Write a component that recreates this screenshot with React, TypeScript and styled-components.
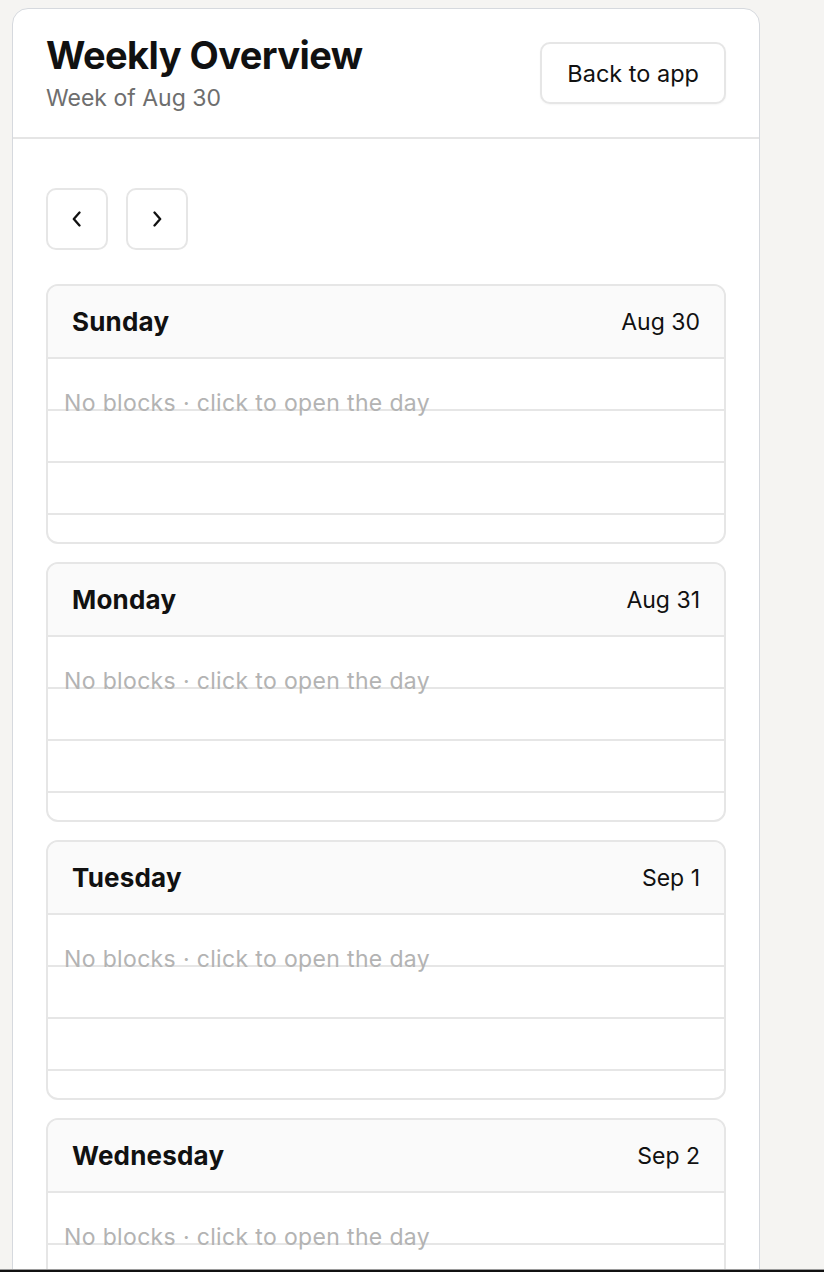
import React from 'react';
import styled, { createGlobalStyle } from 'styled-components';

const GlobalStyle = createGlobalStyle`
  html, body {
    margin: 0;
    padding: 0;
    background: #f5f4f2;
    font-family: Inter, "Noto Sans", "Liberation Sans", sans-serif;
    color: #111111;
  }
  * {
    box-sizing: border-box;
  }
`;

interface Day {
  name: string;
  date: string;
}

const days: Day[] = [
  { name: 'Sunday', date: 'Aug 30' },
  { name: 'Monday', date: 'Aug 31' },
  { name: 'Tuesday', date: 'Sep 1' },
  { name: 'Wednesday', date: 'Sep 2' },
  { name: 'Thursday', date: 'Sep 3' },
  { name: 'Friday', date: 'Sep 4' },
  { name: 'Saturday', date: 'Sep 5' },
];

const HOUR_ROWS = 4;

const Chevron = ({ dir }: { dir: 'left' | 'right' }) => (
  <svg width="12" height="16" viewBox="0 0 12 16" fill="none">
    <path
      d={dir === 'left' ? 'M8.5 1.5 L2.8 8 L8.5 14.5' : 'M3.5 1.5 L9.2 8 L3.5 14.5'}
      stroke="#111"
      strokeWidth="2.3"
      strokeLinecap="round"
      strokeLinejoin="round"
    />
  </svg>
);

const DayCard = ({ day }: { day: Day }) => (
  <Styled.DayCard>
    <Styled.DayHeader>
      <Styled.DayName>{day.name}</Styled.DayName>
      <Styled.DayDate>{day.date}</Styled.DayDate>
    </Styled.DayHeader>
    <Styled.DayBody>
      {Array.from({ length: HOUR_ROWS }).map((_, i) => (
        <Styled.HourRow key={i} />
      ))}
      <Styled.Empty>No blocks · click to open the day</Styled.Empty>
    </Styled.DayBody>
  </Styled.DayCard>
);

const App = () => {
  return (
    <>
      <GlobalStyle />
      <Styled.Page>
        <Styled.Panel>
          <Styled.Header>
            <Styled.TitleBlock>
              <Styled.Title>Weekly Overview</Styled.Title>
              <Styled.Subtitle>Week of Aug 30</Styled.Subtitle>
            </Styled.TitleBlock>
            <Styled.Button>Back to app</Styled.Button>
          </Styled.Header>
          <Styled.Content>
            <Styled.Nav>
              <Styled.IconButton aria-label="Previous week">
                <Chevron dir="left" />
              </Styled.IconButton>
              <Styled.IconButton aria-label="Next week">
                <Chevron dir="right" />
              </Styled.IconButton>
            </Styled.Nav>
            <Styled.DayList>
              {days.map((d) => (
                <DayCard key={d.name} day={d} />
              ))}
            </Styled.DayList>
          </Styled.Content>
        </Styled.Panel>
      </Styled.Page>
      <Styled.WindowEdge />
    </>
  );
};

const Styled = {
  Page: styled.div`
    padding: 8px 0 0 12px;
  `,
  Panel: styled.div`
    width: 748px;
    background: #ffffff;
    border: 1.5px solid #d6d9de;
    border-radius: 16px;
  `,
  Header: styled.header`
    height: 130px;
    display: flex;
    align-items: center;
    justify-content: space-between;
    padding: 0 33px;
    border-bottom: 2px solid #e5e5e5;
  `,
  TitleBlock: styled.div`
    display: flex;
    flex-direction: column;
    gap: 6px;
    margin-top: -1px;
  `,
  Title: styled.h1`
    margin: 0;
    font-size: 38px;
    line-height: 44px;
    font-weight: 700;
    letter-spacing: -0.015em;
  `,
  Subtitle: styled.div`
    font-size: 23px;
    line-height: 30px;
    color: #6e6e6e;
  `,
  Button: styled.button`
    height: 62px;
    padding: 0 25px;
    background: #ffffff;
    border: 2px solid #e6e6e6;
    border-radius: 10px;
    font-family: inherit;
    font-size: 23.5px;
    color: #111111;
    box-shadow: 0 1px 2px rgba(0, 0, 0, 0.04);
  `,
  Content: styled.div`
    padding: 49px 33px 40px;
    display: flex;
    flex-direction: column;
    gap: 34px;
  `,
  Nav: styled.div`
    display: flex;
    gap: 18px;
  `,
  IconButton: styled.button`
    width: 62px;
    height: 62px;
    display: flex;
    align-items: center;
    justify-content: center;
    padding: 0;
    background: #ffffff;
    border: 2px solid #e6e6e6;
    border-radius: 10px;
  `,
  DayList: styled.div`
    display: flex;
    flex-direction: column;
    gap: 18px;
  `,
  DayCard: styled.section`
    border: 2px solid #e6e6e6;
    border-radius: 12px;
    overflow: hidden;
    background: #ffffff;
  `,
  DayHeader: styled.div`
    height: 73px;
    display: flex;
    align-items: center;
    justify-content: space-between;
    padding: 0 24px;
    background: #fafafa;
    border-bottom: 2px solid #e6e6e6;
  `,
  DayName: styled.h2`
    margin: 0;
    font-size: 26px;
    font-weight: 700;
    letter-spacing: 0.2px;
  `,
  DayDate: styled.span`
    font-size: 23px;
  `,
  DayBody: styled.div`
    position: relative;
    height: 183px;
    overflow: hidden;
  `,
  HourRow: styled.div`
    height: 52px;
    border-bottom: 2px solid #e6e6e6;
  `,
  Empty: styled.div`
    position: absolute;
    top: 32px;
    left: 16px;
    font-size: 23px;
    line-height: 24px;
    letter-spacing: 0.35px;
    color: #b3b3b3;
  `,
  WindowEdge: styled.div`
    position: fixed;
    left: 0;
    right: 0;
    bottom: 0;
    height: 3px;
    background: #111111;
    border-top: 1px solid #9a9a9a;
  `,
};

export default App;
